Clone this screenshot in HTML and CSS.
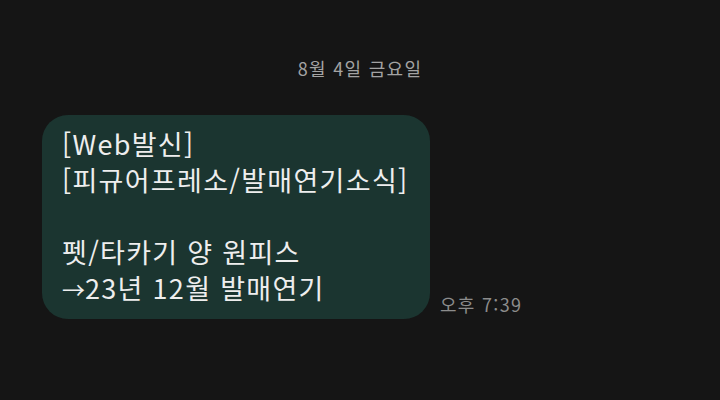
FILE: index.html
```html
<!DOCTYPE html>
<html lang="ko">
<head>
    <meta charset="UTF-8">
    <meta name="viewport" content="width=device-width, initial-scale=1.0">
    <title>메시지</title>
    <link rel="stylesheet" href="styles.css">
</head>
<body>

<div class="chat">
    <!-- Date divider -->
    <div class="date">8월 4일 금요일</div>

    <!-- Incoming message -->
    <div class="row">
        <div class="bubble">
            <p>[Web발신]</p>
            <p>[피규어프레소/발매연기소식]</p>
            <p>&nbsp;</p>
            <p>펫/타카기 양 원피스</p>
            <p><span class="arrow">→</span>23년 12월 발매연기</p>
        </div>
        <span class="time">오후 7:39</span>
    </div>
</div>

</body>
</html>
```

FILE: styles.css
```css
body {
    margin: 0;
    background-color: #151515;
    font-family: "Noto Sans CJK KR", "Noto Sans", sans-serif;
    width: 720px;
    height: 400px;
    overflow: hidden;
}

.chat {
    padding-top: 55px;
}

.date {
    text-align: center;
    font-size: 18px;
    letter-spacing: 1.3px;
    line-height: 26px;
    color: #a3a3a3;
    margin-bottom: 34px;
}

.row {
    display: flex;
    align-items: flex-end;
    padding-left: 42px;
}

.bubble {
    background-color: #1b3530;
    border-radius: 26px;
    width: 388px;
    box-sizing: border-box;
    padding: 11px 16px 12px 20px;
    color: #eeeeee;
    font-size: 27px;
    letter-spacing: 1.3px;
    line-height: 36px;
}

.bubble p {
    margin: 0;
}

.arrow {
    font-size: 23px;
    letter-spacing: 0;
}

.time {
    font-size: 18px;
    letter-spacing: 1.3px;
    color: #8c8c8c;
    margin-left: 10px;
    margin-bottom: 2px;
}
```
